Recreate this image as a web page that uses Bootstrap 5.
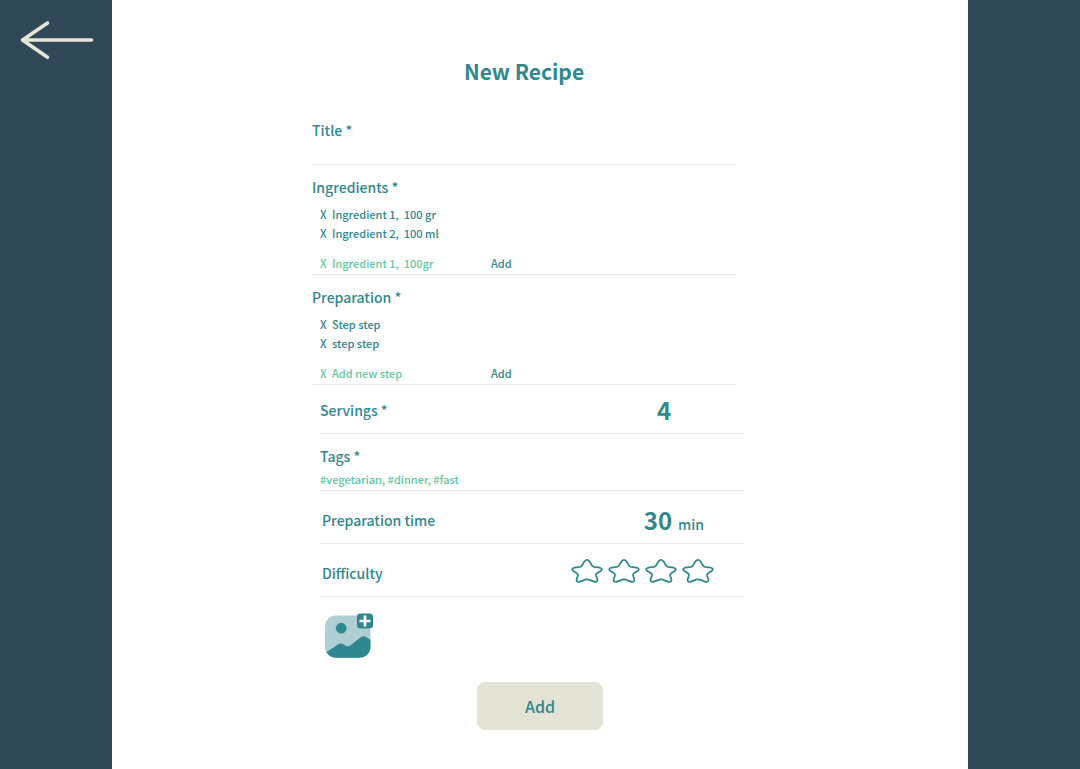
<!DOCTYPE html>
<html lang="en">
<head>
<meta charset="utf-8">
<meta name="viewport" content="width=device-width, initial-scale=1">
<title>New Recipe</title>
<link href="https://cdn.jsdelivr.net/npm/bootstrap@5.3.0/dist/css/bootstrap.min.css" rel="stylesheet">
<style>
  :root { --teal: #2f8790; --mint: #5fc9a0; --sand: #e3e4d4; --navy: #304858; }
  body { font-family: "Noto Sans CJK JP", "Noto Sans", sans-serif; font-weight: 500; color: var(--teal); background: var(--navy); }
  .side { width: 112px; }
  .recipe-form { width: 456px; max-width: 100%; padding-right: 24px; }
  .page-title { font-size: 21px; line-height: 28px; font-weight: 700; padding: 57px 32px 35px 0; }
  .field { border-bottom: 1px solid #e9eade; margin-right: 8px; }
  .field-inset { margin: 0 0 0 8px; }
  .field-label { font-size: 14px; line-height: 20px; font-weight: 500; display: block; }
  .small-line { font-size: 11px; line-height: 19px; }
  .pad-top { padding-top: 12px; }
  .pad-left { padding-left: 8px; }
  .bare { border: 0; padding: 0; background: none; color: inherit; font-weight: inherit; outline-offset: 2px; }
  .bare::placeholder { color: var(--mint); opacity: 1; }
  .mint { color: var(--mint); }
  .x-btn { width: 12px; text-align: left; }
  .new-row { padding: 11px 0 1px; }
  .new-input { width: 159px; height: 19px; }
  .title-input { height: 24px; }
  .row-line { height: 53px; padding: 6px 30px 0 2px; }
  .row-servings { height: 49px; padding: 2px 64px 0 0; }
  .row-tags { padding-bottom: 1px; }
  .big { font-size: 24px; line-height: 32px; width: 32px; text-align: center; font-weight: 700; }
  .unit { font-size: 14px; line-height: 20px; }
  .time-box { gap: 4px; padding-right: 10px; }
  .stars { gap: 5px; margin-top: -4px; }
  .stars label, .photo { cursor: pointer; }
  .photo { margin: 15px 0 0 12px; }
  .add-btn { width: 126px; height: 48px; margin: 24px 0 39px; border-radius: 8px; font-size: 16px; font-weight: 500; color: var(--teal); background: var(--sand); }
  svg { display: block; }
</style>
</head>
<body>
<div class="d-flex min-vh-100">
  <aside class="side flex-shrink-0">
    <a href="#" class="d-inline-block ms-3 mt-3" aria-label="Back">
      <svg width="80" height="48" viewBox="16 16 80 48" fill="none" stroke="#e6e6d6" stroke-width="3.6" stroke-linecap="round" stroke-linejoin="round"><path d="M91.500 40H22.500M47.500 23L22.500 40L47.500 57.300"/></svg>
    </a>
  </aside>
  <main class="flex-grow-1 bg-white d-flex flex-column align-items-center">
    <h1 class="page-title mb-0">New Recipe</h1>
    <form class="recipe-form" id="recipe">
      <div class="field">
        <label class="field-label" for="title">Title *</label>
        <input id="title" type="text" class="bare title-input w-100 d-block">
      </div>

      <section class="field pad-top">
        <label class="field-label mb-2" for="ingredient">Ingredients *</label>
        <div class="small-line pad-left">
          <div class="d-flex"><button type="button" class="bare x-btn">X</button><span>Ingredient 1,&nbsp; 100 gr</span></div>
          <div class="d-flex"><button type="button" class="bare x-btn">X</button><span>Ingredient 2,&nbsp; 100 ml</span></div>
          <div class="d-flex new-row">
            <button type="button" class="bare x-btn mint">X</button>
            <input id="ingredient" type="text" class="bare new-input" placeholder="Ingredient 1,&nbsp; 100gr">
            <button type="button" class="bare">Add</button>
          </div>
        </div>
      </section>

      <section class="field pad-top">
        <label class="field-label mb-2" for="step">Preparation *</label>
        <div class="small-line pad-left">
          <div class="d-flex"><button type="button" class="bare x-btn">X</button><span>Step step</span></div>
          <div class="d-flex"><button type="button" class="bare x-btn">X</button><span>step step</span></div>
          <div class="d-flex new-row">
            <button type="button" class="bare x-btn mint">X</button>
            <input id="step" type="text" class="bare new-input" placeholder="Add new step">
            <button type="button" class="bare">Add</button>
          </div>
        </div>
      </section>

      <div class="field field-inset row-servings d-flex align-items-center justify-content-between">
        <label class="field-label" for="servings">Servings *</label>
        <input id="servings" type="text" inputmode="numeric" class="bare big" value="4">
      </div>

      <div class="field field-inset pad-top row-tags">
        <label class="field-label mb-1" for="tags">Tags *</label>
        <input id="tags" type="text" class="bare small-line d-block w-100" placeholder="#vegetarian, #dinner, #fast">
      </div>

      <div class="field field-inset row-line d-flex align-items-center">
        <label class="field-label me-auto" for="time">Preparation time</label>
        <div class="time-box d-flex align-items-baseline">
          <input id="time" type="text" inputmode="numeric" class="bare big" value="30">
          <span class="unit">min</span>
        </div>
      </div>

      <div class="field field-inset row-line d-flex align-items-center" role="radiogroup" aria-labelledby="difficulty">
        <span class="field-label me-auto" id="difficulty">Difficulty</span>
        <svg class="d-none"><symbol id="star" viewBox="0 0 34 26"><path d="M14.300 2.800Q17 -0.400 19.700 2.800L22.300 7.200Q23 8.300 24.300 8.600L30.300 9.300Q34.500 10.600 31.400 13.100L27.700 15.400Q26.300 16.400 26.700 18L28 21.800Q28.500 25 25 24.500L19 22.200Q17 21.500 15 22.200L9 24.500Q5.500 25 6 21.800L7.300 18Q7.700 16.400 6.300 15.400L2.600 13.100Q-0.500 10.600 3.700 9.300L9.700 8.600Q11 8.300 11.700 7.200Z" fill="none" stroke="#2f8790" stroke-width="1.900" stroke-linejoin="round"/></symbol></svg>
        <div class="stars d-flex">
          <input class="visually-hidden" type="radio" name="level" id="d1"><label for="d1" aria-label="1 star"><svg width="32" height="26"><use href="#star"/></svg></label>
          <input class="visually-hidden" type="radio" name="level" id="d2"><label for="d2" aria-label="2 stars"><svg width="32" height="26"><use href="#star"/></svg></label>
          <input class="visually-hidden" type="radio" name="level" id="d3"><label for="d3" aria-label="3 stars"><svg width="32" height="26"><use href="#star"/></svg></label>
          <input class="visually-hidden" type="radio" name="level" id="d4"><label for="d4" aria-label="4 stars"><svg width="32" height="26"><use href="#star"/></svg></label>
        </div>
      </div>

      <button type="button" class="bare photo d-block" aria-label="Add photo">
        <svg width="50" height="46" viewBox="324 612 50 46">
          <defs><clipPath id="frame"><rect x="325" y="615.500" width="45.500" height="42.300" rx="11"/></clipPath></defs>
          <g clip-path="url(#frame)">
            <rect x="325" y="615" width="46" height="43" fill="#afcfd4"/>
            <path d="M325 653L338 644.500Q341 642.500 344 644.800Q347.500 647.800 351 645L359 638.500Q363 634.800 367 637.500L372 641V659H325Z" fill="#2f8790"/>
          </g>
          <circle cx="341.200" cy="628.200" r="5.400" fill="#2f8790"/>
          <rect x="357" y="613.500" width="16" height="15" rx="3.500" fill="#2f8790"/>
          <path d="M365 615.500v11M359.500 621h11" stroke="#fff" stroke-width="2.600"/>
        </svg>
      </button>
    </form>
    <button type="submit" form="recipe" class="btn add-btn">Add</button>
  </main>
  <aside class="side flex-shrink-0"></aside>
</div>
<script src="https://cdn.jsdelivr.net/npm/bootstrap@5.3.0/dist/js/bootstrap.bundle.min.js"></script>
</body>
</html>
